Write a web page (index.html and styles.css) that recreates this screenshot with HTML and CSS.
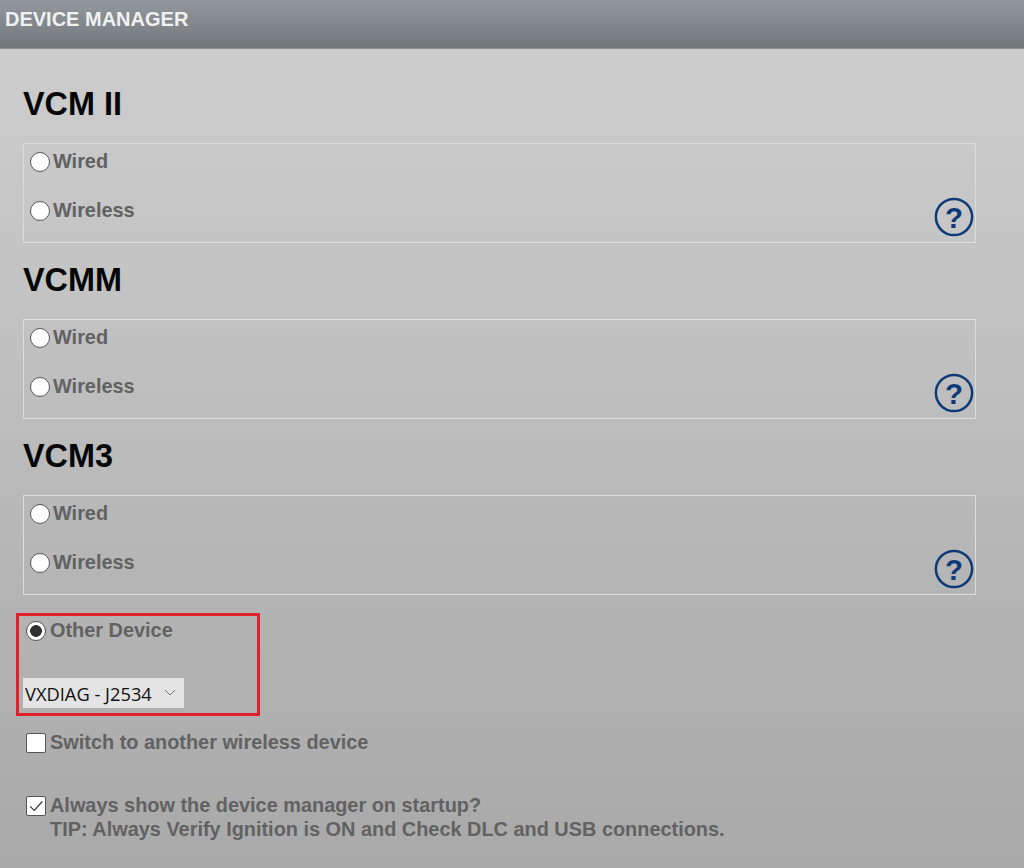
FILE: index.html
```html
<!DOCTYPE html>
<html lang="en">
<head>
<meta charset="utf-8">
<title>Device Manager</title>
<link rel="stylesheet" href="styles.css">
</head>
<body>
<header class="topbar">DEVICE MANAGER</header>
<main class="content">
  <section class="device">
    <h2 class="device-title">VCM II</h2>
    <div class="device-box">
      <label class="option"><input class="radio" type="radio" name="d">Wired</label>
      <label class="option"><input class="radio" type="radio" name="d">Wireless</label>
      <svg class="help" viewBox="0 0 38 38" aria-hidden="true"><circle cx="19" cy="19" r="17.2"/><text x="19" y="29" class="help-mark">?</text></svg>
    </div>
  </section>
  <section class="device">
    <h2 class="device-title">VCMM</h2>
    <div class="device-box">
      <label class="option"><input class="radio" type="radio" name="d">Wired</label>
      <label class="option"><input class="radio" type="radio" name="d">Wireless</label>
      <svg class="help" viewBox="0 0 38 38" aria-hidden="true"><circle cx="19" cy="19" r="17.2"/><text x="19" y="29" class="help-mark">?</text></svg>
    </div>
  </section>
  <section class="device">
    <h2 class="device-title">VCM3</h2>
    <div class="device-box">
      <label class="option"><input class="radio" type="radio" name="d">Wired</label>
      <label class="option"><input class="radio" type="radio" name="d">Wireless</label>
      <svg class="help" viewBox="0 0 38 38" aria-hidden="true"><circle cx="19" cy="19" r="17.2"/><text x="19" y="29" class="help-mark">?</text></svg>
    </div>
  </section>
  <div class="other">
    <label class="option other-option"><input class="radio" type="radio" name="d" checked>Other Device</label>
    <div class="select-wrap">
      <select class="select"><option>VXDIAG - J2534</option></select>
      <svg class="chevron" viewBox="0 0 12 7" aria-hidden="true"><path d="M1 1l5 5 5-5"/></svg>
    </div>
  </div>
  <label class="check-row switch"><input class="check" type="checkbox">Switch to another wireless device</label>
  <label class="check-row startup">
    <span class="check-box"><svg viewBox="0 0 20 20" aria-hidden="true"><path d="M3.5 10.5l4.5 4.5 9-10"/></svg></span>
    <span>Always show the device manager on startup?<br>TIP: Always Verify Ignition is ON and Check DLC and USB connections.</span>
  </label>
</main>
</body>
</html>
```
FILE: styles.css
```css
* { box-sizing: border-box; }
body {
  margin: 0;
  height: 868px;
  overflow: hidden;
  font-family: "Liberation Sans", Arial, sans-serif;
  background: linear-gradient(180deg, #cdcdcd 48px, #c5c5c5 250px, #b3b3b3 620px, #a9a9a9 868px);
}
.topbar {
  height: 49px;
  padding: 8px 0 0 5px;
  font-size: 20px;
  line-height: 23px;
  font-weight: 700;
  color: #f0f1f1;
  background: linear-gradient(180deg, #93979e 0%, #868b91 40%, #72777a 100%);
  border-bottom: 1px solid #8b8e90;
}
.content {
  display: flex;
  flex-direction: column;
  padding: 37px 48px 0 23px;
}
.device + .device { margin-top: 19px; }
.device-title {
  margin: 0 0 20px;
  height: 37px;
  font-size: 32.4px;
  line-height: 37px;
  font-weight: 700;
  color: #060608;
}
.device-box {
  position: relative;
  height: 100px;
  padding: 6px 0 0 6px;
  border: 1px solid #dcdcdc;
  display: flex;
  flex-direction: column;
  gap: 26px;
}
.option {
  display: flex;
  align-items: center;
  height: 23px;
  font-size: 19.9px;
  font-weight: 700;
  line-height: 23px;
  color: #626262;
}
.radio {
  appearance: none;
  flex: none;
  width: 20px;
  height: 20px;
  margin: 0 3px 0 0;
  background: #fff;
  border: 1.5px solid #555;
  border-radius: 50%;
}
.radio:checked {
  background: radial-gradient(circle, #2f2f2f 0 5.5px, #fff 6.2px);
}
.help {
  position: absolute;
  right: 1px;
  bottom: 5px;
  width: 40px;
  height: 40px;
}
.help circle { fill: none; stroke: #0e3a78; stroke-width: 2.4; }
.help-mark {
  fill: #0e3a78;
  font-family: "Liberation Sans", Arial, sans-serif;
  font-size: 28px;
  font-weight: 700;
  text-anchor: middle;
}
.other {
  width: 244px;
  height: 103px;
  margin: 18px 0 0 -7px;
  padding: 3px 0 0 7px;
  border: 3px solid #e0202c;
}
.other-option .radio { margin-right: 4px; }
.select-wrap {
  position: relative;
  width: 161px;
  height: 30px;
  margin: 36px 0 0 -3px;
}
.select {
  appearance: none;
  display: block;
  width: 100%;
  height: 100%;
  padding: 0 0 0 2px;
  border: 0;
  border-radius: 0;
  background: #e4e4e4;
  color: #111;
  font-family: "Open Sans", sans-serif;
  font-size: 18.3px;
}
.chevron {
  position: absolute;
  right: 8px;
  top: 11px;
  width: 12px;
  height: 7px;
  fill: none;
  stroke: #777;
  stroke-width: 1;
}
.check-row {
  display: flex;
  font-size: 19.9px;
  font-weight: 700;
  color: #626262;
  margin-left: 3px;
}
.switch { height: 24px; margin-top: 15px; line-height: 22px; }
.startup { margin-top: 38px; line-height: 24px; }
.check {
  appearance: none;
  flex: none;
  width: 20px;
  height: 20px;
  margin: 2px 4px 0 0;
  background: #fff;
  border: 1.5px solid #555;
  border-radius: 2px;
}
.check-box {
  flex: none;
  width: 20px;
  height: 20px;
  margin: 3px 4px 0 0;
  background: #fff;
  border: 1.5px solid #555;
  border-radius: 2px;
  display: block;
}
.check-box svg {
  display: block;
  width: 100%;
  height: 100%;
  fill: none;
  stroke: #333;
  stroke-width: 1.3;
}
```
